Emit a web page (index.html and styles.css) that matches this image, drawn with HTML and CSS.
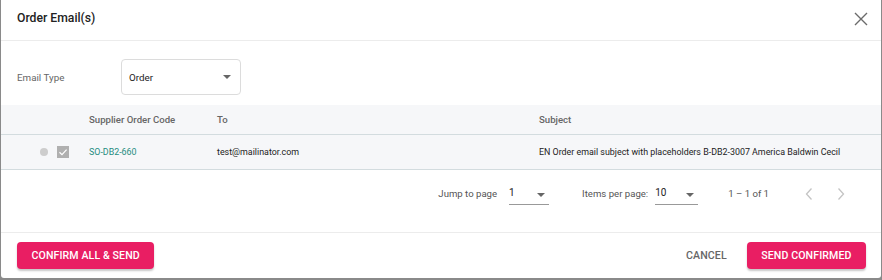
FILE: index.html
```html
<!DOCTYPE html>
<html lang="en">
<head>
  <title>Order Email(s)</title>
  <link rel="stylesheet" href="styles.css">
</head>
<body>
  <div class="dialog">
    <div class="dialog-header">
      <h2 class="dialog-title">Order Email(s)</h2>
      <span class="close">
        <svg width="14" height="14" viewBox="0 0 14 14"><path d="M1 1 L13 13 M13 1 L1 13" stroke="#6b6b6b" stroke-width="1.4" fill="none"/></svg>
      </span>
    </div>

    <div class="form-row">
      <label class="form-label">Email Type</label>
      <div class="select-box">
        <span>Order</span>
        <span class="caret"></span>
      </div>
    </div>

    <div class="table">
      <div class="table-row table-head">
        <div class="cell-select"></div>
        <div>Supplier Order Code</div>
        <div>To</div>
        <div>Subject</div>
      </div>
      <div class="table-row table-body">
        <div class="cell-select">
          <span class="dot"></span>
          <span class="check">
            <svg width="12" height="12" viewBox="0 0 12 12"><path d="M2.5 6.2 L5 8.6 L9.6 3.6" stroke="#fff" stroke-width="1.2" fill="none"/></svg>
          </span>
        </div>
        <div class="code">SO-DB2-660</div>
        <div>test@mailinator.com</div>
        <div>EN Order email subject with placeholders B-DB2-3007 America Baldwin Cecil</div>
      </div>
    </div>

    <div class="paginator">
      <span class="pg-label">Jump to page</span>
      <div class="pg-select jump"><span>1</span><span class="caret"></span></div>
      <span class="pg-label items">Items per page:</span>
      <div class="pg-select size"><span>10</span><span class="caret"></span></div>
      <span class="pg-range">1 – 1 of 1</span>
      <span class="pg-nav">
        <svg width="10" height="14" viewBox="0 0 10 14"><path d="M7.5 1.5 L2.5 7 L7.5 12.5" stroke="#c4c4c4" stroke-width="1.3" fill="none"/></svg>
      </span>
      <span class="pg-nav">
        <svg width="10" height="14" viewBox="0 0 10 14"><path d="M2.5 1.5 L7.5 7 L2.5 12.5" stroke="#c4c4c4" stroke-width="1.3" fill="none"/></svg>
      </span>
    </div>

    <div class="dialog-footer">
      <button class="btn btn-primary">CONFIRM ALL &amp; SEND</button>
      <div class="footer-right">
        <button class="btn btn-flat">CANCEL</button>
        <button class="btn btn-primary">SEND CONFIRMED</button>
      </div>
    </div>
  </div>
</body>
</html>
```

FILE: styles.css
```css
body {
  margin: 0;
  background: #8a8a8a;
  font-family: Roboto, "Liberation Sans", Arial, sans-serif;
  color: #333;
  width: 882px;
  height: 280px;
  overflow: hidden;
}

.dialog {
  margin-left: 1px;
  width: 880px;
  height: 278px;
  background: #fff;
  border-radius: 0 0 3px 3px;
  display: flex;
  flex-direction: column;
}

.dialog-header {
  height: 40px;
  border-bottom: 1px solid #ececec;
  display: flex;
  align-items: center;
  justify-content: space-between;
  padding: 0 13px 0 16px;
}

.dialog-title {
  margin: 0;
  font-size: 12.2px;
  font-weight: 500;
  color: #222;
  position: relative;
  top: -2px;
}

.close {
  display: flex;
  position: relative;
  top: -1px;
}

.form-row {
  display: flex;
  align-items: center;
  padding: 18px 0 10px 16px;
}

.form-label {
  width: 104px;
  font-size: 9.8px;
  color: #666;
}

.select-box {
  display: flex;
  align-items: center;
  justify-content: space-between;
  padding: 0 9px 0 7px;
  box-sizing: border-box;
  width: 120px;
  height: 36px;
  border: 1px solid #dcdcdc;
  border-radius: 4px;
  font-size: 9.8px;
  color: #222;
}

.caret {
  width: 0;
  height: 0;
  border-left: 4.5px solid transparent;
  border-right: 4.5px solid transparent;
  border-top: 4.5px solid #666;
}

.table {
  font-size: 8.9px;
}

.table-row {
  display: grid;
  grid-template-columns: 88px 128px 322px 1fr;
  align-items: center;
  background: #f6f7f9;
  border-bottom: 1px solid #d3dcdf;
}

.table-head {
  height: 29px;
  font-size: 9.6px;
  font-weight: 500;
  color: #666;
}

.table-body {
  height: 34px;
  color: #222;
}

.cell-select {
  display: flex;
  align-items: center;
  padding-left: 39px;
  gap: 9px;
}

.dot {
  width: 8px;
  height: 8px;
  border-radius: 50%;
  background: #cdcdcd;
}

.check {
  width: 12px;
  height: 12px;
  background: #b0b0b0;
  display: flex;
}

.code {
  color: #1e8c80;
}

.paginator {
  height: 47px;
  padding-bottom: 15px;
  display: flex;
  align-items: center;
  justify-content: flex-end;
  padding-right: 24px;
  font-size: 9.6px;
  color: #555;
}

.pg-label {
  margin-right: 12px;
}

.pg-label.items {
  margin-left: 33px;
  margin-right: 7px;
}

.pg-select {
  display: flex;
  align-items: center;
  justify-content: space-between;
  border-bottom: 1px solid #999;
  height: 18px;
  margin-top: 4px;
  padding: 0 4px 0 0;
  box-sizing: border-box;
  color: #222;
  font-size: 10px;
}

.pg-select span:first-child {
  position: relative;
  top: -3px;
}

.pg-select.jump {
  width: 40px;
}

.pg-select.size {
  width: 43px;
}

.pg-range {
  margin-left: 30px;
  margin-right: 24px;
}

.pg-nav {
  display: flex;
  width: 32px;
  justify-content: center;
}

.dialog-footer {
  flex: 1;
  border-top: 1px solid #ececec;
  display: flex;
  justify-content: space-between;
  align-items: center;
  padding: 0 15px 0 16px;
}

.footer-right {
  display: flex;
  align-items: center;
  gap: 20px;
}

.btn {
  font-family: inherit;
  font-size: 10.6px;
  font-weight: 500;
  border: 0;
  border-radius: 4px;
  height: 27px;
  padding: 0 14.5px;
  letter-spacing: 0.1px;
  cursor: pointer;
}

.btn-primary {
  background: #e91e63;
  color: #fff;
  box-shadow: 0 2px 2px rgba(0, 0, 0, 0.22);
}

.btn-flat {
  background: transparent;
  color: #666;
  padding: 0;
}
```
